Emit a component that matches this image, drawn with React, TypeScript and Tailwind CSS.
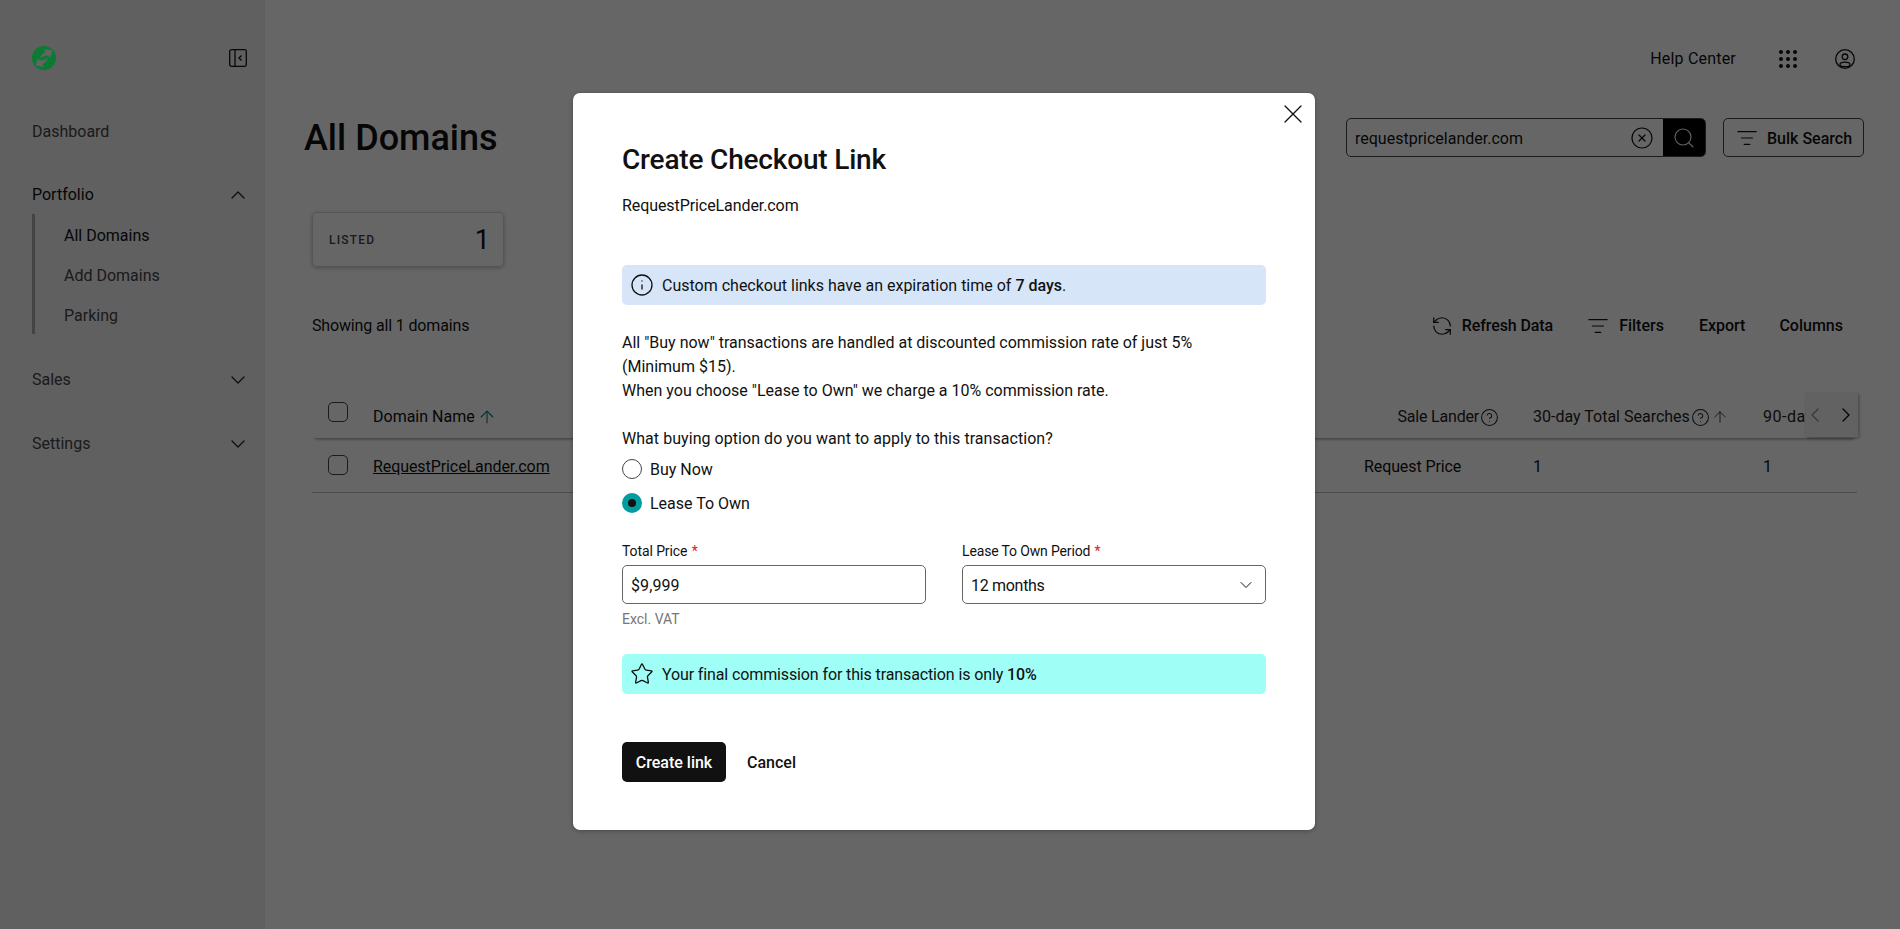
import React from "react";
import { X, Info, ChevronDown, ChevronUp, Star, RefreshCcw, Search, CircleX, CircleHelp, ArrowUp, ChevronLeft, ChevronRight, ListFilter } from "lucide-react";

function Logo() {
  return (
    <svg viewBox="0 0 24 24" className="w-6 h-6 relative z-10">
      <circle cx="12" cy="12" r="12" fill="#0b7a33" />
      <path d="M8 12C9 9 11 7 13.5 6L12 3L20.5 4.5L18 12L16 9.5C13 9.5 10.5 10.5 8 12Z" fill="#636466" />
      <path d="M16 12C15 15 13 17 10.5 18L12 21L3.5 19.5L6 12L8 14.5C11 14.5 13.5 13.5 16 12Z" fill="#636466" />
    </svg>
  );
}

function Collapse() {
  return (
    <svg viewBox="0 0 18 18" className="w-[18px] h-[18px]" fill="none" stroke="#111" strokeWidth="1.3">
      <rect x="0.7" y="0.7" width="16.6" height="16.6" rx="1.8" />
      <path d="M6 1V17" />
      <path d="M12.5 6.5L10 9L12.5 11.5" />
    </svg>
  );
}

function Dots() {
  return (
    <svg viewBox="0 0 20 20" className="w-5 h-5" fill="#111">
      {[3, 10, 17].flatMap((y) =>
        [3, 10, 17].map((x) => <circle key={`${x}-${y}`} cx={x} cy={y} r="2" />)
      )}
    </svg>
  );
}

function User() {
  return (
    <svg viewBox="0 0 20 22" className="w-5 h-[22px]" fill="none" stroke="#111" strokeWidth="1.3">
      <circle cx="10" cy="11" r="9.3" />
      <circle cx="10" cy="8.8" r="2.8" />
      <ellipse cx="10" cy="16.4" rx="5" ry="2.3" />
    </svg>
  );
}

function Check() {
  return <div className="w-5 h-[20px] rounded-[5px] border border-[#444] bg-white" />;
}

function NavItem({ label, icon, dark }: { label: string; icon?: React.ReactNode; dark?: boolean }) {
  return (
    <div className={`flex items-center justify-between h-6 ${dark ? "text-[#111]" : "text-[#444]"}`}>
      <span>{label}</span>
      {icon}
    </div>
  );
}

export default function App() {
  return (
    <div className="relative h-[929px] w-[1900px] overflow-hidden flex bg-white text-[#111] text-[16px] leading-6 font-['Roboto',sans-serif]">
      <aside className="w-[265px] shrink-0 bg-[#eff0f3] pl-8 pr-[15px] pt-[46px]">
        <div className="flex items-center justify-between h-6 pr-[3px]">
          <Logo />
          <Collapse />
        </div>
        <div className="mt-[50px]"><NavItem label="Dashboard" /></div>
        <div className="mt-[39px]"><NavItem dark label="Portfolio" icon={<ChevronUp className="w-6 h-6 text-[#222]" strokeWidth={1.3} />} /></div>
        <div className="mt-[7px] border-l-[3px] border-[#aaa] h-[120px] pl-[29px] pt-[10px] flex flex-col gap-4">
          <span className="text-[#111]">All Domains</span>
          <span className="text-[#444]">Add Domains</span>
          <span className="text-[#444]">Parking</span>
        </div>
        <div className="mt-[34px]"><NavItem label="Sales" icon={<ChevronDown className="w-6 h-6 text-[#222]" strokeWidth={1.3} />} /></div>
        <div className="mt-[40px]"><NavItem label="Settings" icon={<ChevronDown className="w-6 h-6 text-[#222]" strokeWidth={1.3} />} /></div>
      </aside>

      <main className="flex-1 min-w-0">
        <header className="flex items-center justify-end pt-[48px] h-[70px] pr-[45px]">
          <span className="tracking-[0.2px]">Help Center</span>
          <span className="ml-[42px]"><Dots /></span>
          <span className="ml-[37px]"><User /></span>
        </header>

        <div className="mt-[48px] flex items-center justify-between pl-[39px] pr-9 h-[39px]">
          <h1 className="text-[36px] font-medium leading-[40px]">All Domains</h1>
          <div className="flex items-center gap-[17px]">
            <div className="flex w-[360px] h-[39px] rounded-[5px] border border-[#444] overflow-hidden">
              <span className="flex-1 pl-2 pt-[2px] self-center">requestpricelander.com</span>
              <span className="w-[42px] flex items-center justify-center"><CircleX className="w-6 h-6" strokeWidth={1.2} /></span>
              <span className="w-[42px] bg-black text-white flex items-center justify-center"><Search className="w-6 h-6" strokeWidth={1.1} /></span>
            </div>
            <div className="flex items-center gap-[9px] w-[141px] h-[39px] rounded-[5px] border border-[#444] pl-[12px]">
              <ListFilter className="w-[22px] h-[22px]" strokeWidth={1.3} />
              <span className="font-medium pt-[2px]">Bulk Search</span>
            </div>
          </div>
        </div>

        <div className="ml-[47px] mt-[55px] w-[192px] h-[55px] rounded-[5px] border border-[#d5d5d5] shadow-[0_1px_4px_rgba(0,0,0,0.25)] flex items-center justify-between pl-4 pr-[13px]">
          <span className="text-[12px] font-medium tracking-[1.2px] text-[#444]">LISTED</span>
          <span className="text-[27px] leading-8">1</span>
        </div>

        <div className="ml-[47px] mr-[57px] mt-[47px] flex items-center justify-between h-6">
          <span className="tracking-[-0.15px]">Showing all 1 domains</span>
          <div className="flex items-center font-medium">
            <RefreshCcw className="w-[22px] h-[22px]" strokeWidth={1.3} />
            <span className="ml-[9px] tracking-[-0.1px]">Refresh Data</span>
            <ListFilter className="w-[22px] h-[22px] ml-[34px]" strokeWidth={1.3} />
            <span className="ml-[10px]">Filters</span>
            <span className="ml-[35px]">Export</span>
            <span className="ml-[34px]">Columns</span>
          </div>
        </div>

        <div className="ml-[47px] mr-[43px] mt-[57px] relative">
          <div className="flex items-center h-[43px] shadow-[0_4px_3px_-3px_rgba(0,0,0,0.45)] pl-4 overflow-hidden">
            <div className="-mt-[9px]"><Check /></div>
            <div className="ml-[25px] w-[991px] flex items-center gap-[2px] pt-[1px]">
              Domain Name <ArrowUp className="w-5 h-5 text-[#007a7a]" strokeWidth={1.3} />
            </div>
            <div className="w-[169px] shrink-0 flex items-center justify-end pr-[34px] gap-[1px] text-[#222] pt-[1px] tracking-[-0.2px]">
              Sale Lander <CircleHelp className="w-[19px] h-[19px]" strokeWidth={1.3} />
            </div>
            <div className="w-[230px] shrink-0 flex items-center gap-[1px] text-[#222] whitespace-nowrap pt-[1px]">
              30-day Total Searches <CircleHelp className="w-[19px] h-[19px] shrink-0" strokeWidth={1.3} /> <ArrowUp className="w-[18px] h-[18px] shrink-0" strokeWidth={1.1} />
            </div>
            <div className="w-[93px] shrink-0 whitespace-nowrap text-[#222] pt-[1px] tracking-[0.5px]">90-day Total</div>
          </div>
          <div className="flex items-center h-[55px] border-b border-[#bbb] pl-4">
            <Check />
            <div className="ml-[25px] w-[991px] underline tracking-[-0.08px] pt-[3px]">RequestPriceLander.com</div>
            <div className="w-[169px] pt-[3px] tracking-[-0.1px]">Request Price</div>
            <div className="w-[230px] pt-[3px]">1</div>
            <div className="pt-[3px]">1</div>
          </div>
          <div className="absolute right-[-1px] top-[-2px] w-[52px] h-[44px] bg-[#f6f6f6] shadow-[1px_1px_3px_rgba(0,0,0,0.35)] flex items-center justify-between">
            <ChevronLeft className="w-6 h-6 -ml-[3px] text-[#888]" strokeWidth={1.2} />
            <ChevronRight className="w-6 h-6" strokeWidth={1.4} />
          </div>
        </div>
      </main>

      <div className="absolute inset-0 bg-black/60">
        <div className="absolute left-[573px] top-[93px] w-[742px] h-[737px] bg-white rounded-[7px] shadow-[0_1px_4px_rgba(0,0,0,0.3)] pl-[49px] pr-[49px] pt-[50px]">
          <X className="absolute right-[6px] top-[5px] w-8 h-8" strokeWidth={0.95} />
          <h2 className="text-[28px] leading-[34px] font-medium tracking-[-0.18px]">Create Checkout Link</h2>
          <p className="mt-[17px] tracking-[-0.08px]">RequestPriceLander.com</p>
          <div className="mt-[47px] h-10 rounded-[5px] bg-[#d6e6f8] flex items-center pl-[8px] gap-[8px]">
            <Info className="w-6 h-6" strokeWidth={1.3} />
            <span className="pt-[2px]">Custom checkout links have an expiration time of <b className="font-medium">7 days</b>.</span>
          </div>
          <p className="mt-[26px]">All "Buy now" transactions are handled at discounted commission rate of just 5%<br />(Minimum $15).<br />When you choose "Lease to Own" we charge a 10% commission rate.</p>
          <p className="mt-6 tracking-[0.05px]">What buying option do you want to apply to this transaction?</p>
          <div className="mt-[6px] flex items-center gap-2 h-6">
            <span className="w-5 h-5 rounded-full border border-[#444]" />
            <span className="pt-[2px]">Buy Now</span>
          </div>
          <div className="mt-[10px] flex items-center gap-2 h-6">
            <span className="w-5 h-5 rounded-full bg-[#009c9e] flex items-center justify-center"><span className="w-2 h-2 rounded-full bg-[#111]" /></span>
            <span className="pt-[2px]">Lease To Own</span>
          </div>
          <div className="mt-[26px] flex gap-[36px]">
            <div className="w-[304px]">
              <div className="text-[14px] leading-5 tracking-[-0.1px]">Total Price <span className="text-[#d92020] ml-[1px]">*</span></div>
              <div className="mt-1 h-[39px] rounded-[5px] border border-[#666] flex items-center pl-2 pt-[2px] tracking-[0.1px]">$9,999</div>
              <div className="mt-[5px] text-[14px] leading-5 text-[#767676]">Excl. VAT</div>
            </div>
            <div className="w-[304px]">
              <div className="text-[14px] leading-5 tracking-[-0.15px]">Lease To Own Period <span className="text-[#d92020] ml-[1px]">*</span></div>
              <div className="mt-1 h-[39px] rounded-[5px] border border-[#666] flex items-center justify-between pl-2 pr-[9px]"><span className="pt-[2px] tracking-[-0.3px]">12 months</span> <ChevronDown className="w-5 h-5" strokeWidth={1.2} /></div>
            </div>
          </div>
          <div className="mt-[25px] h-10 rounded-[5px] bg-[#9ffff7] flex items-center pl-[8px] gap-[8px]">
            <Star className="w-6 h-6" strokeWidth={1.3} />
            <span className="pt-[2px] tracking-[-0.12px]">Your final commission for this transaction is only <b className="font-medium">10%</b></span>
          </div>
          <div className="mt-12 flex items-center gap-[21px]">
            <div className="w-[104px] h-10 rounded-[5px] bg-[#111] text-white flex items-center justify-center font-medium pt-[2px]">Create link</div>
            <span className="font-medium pt-[2px]">Cancel</span>
          </div>
        </div>
      </div>
    </div>
  );
}
